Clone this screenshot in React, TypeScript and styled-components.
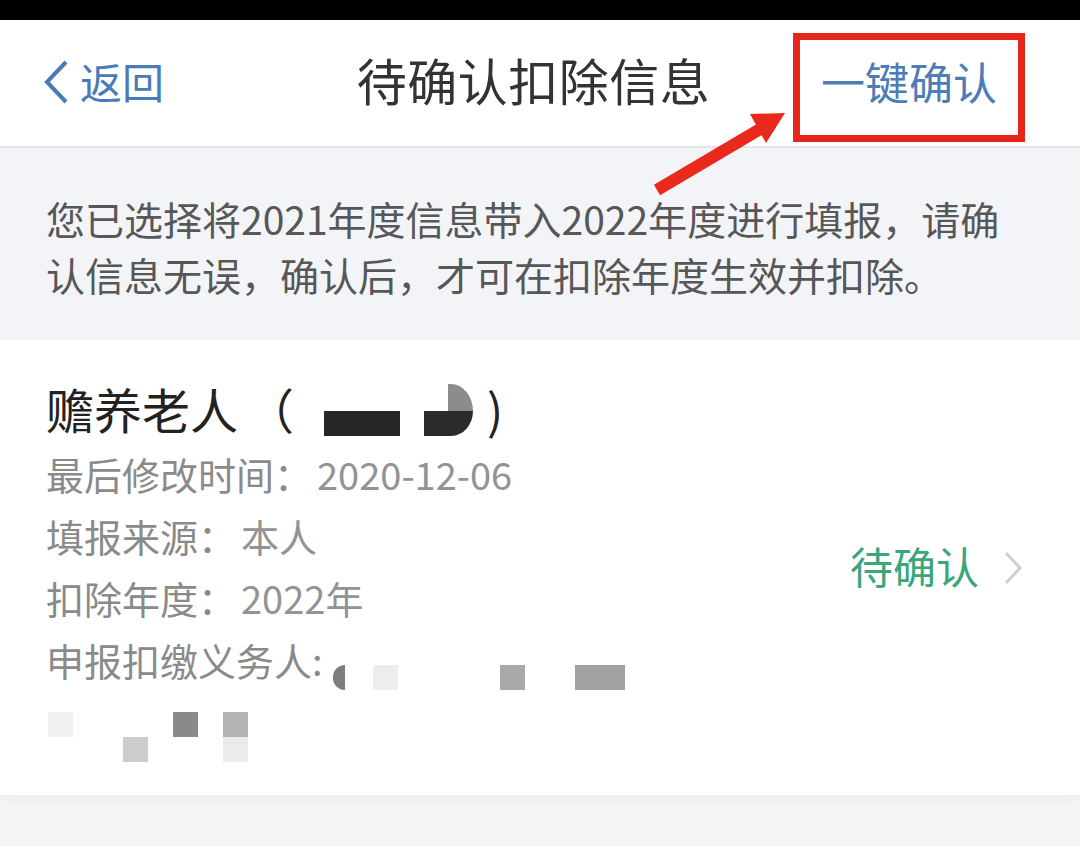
import React from 'react';
import styled, {createGlobalStyle} from 'styled-components';

const GlobalStyle = createGlobalStyle`
  body {
    margin: 0;
    background: #f5f5f8;
    font-family: "Noto Sans CJK SC", "Noto Sans", sans-serif;
  }
`

const Page = styled.div`
  position: relative;
  width: 1080px;
  height: 846px;
  overflow: hidden;
  background: #f5f5f8;
`

const StatusBar = styled.div`
  height: 20px;
  background: #000;
`

const Header = styled.div`
  display: grid;
  grid-template-columns: 1fr auto 1fr;
  align-items: center;
  height: 126px;
  padding: 0 55px 0 42px;
  background: #fff;
  border-bottom: 2px solid #e6e6e9;
`

const Back = styled.div`
  display: flex;
  align-items: center;
  gap: 10px;
  margin-bottom: 6px;
  color: #4b7bb6;
  font-size: 42px;

  & > svg { margin-top: 4px; }
`

const Title = styled.div`
  margin-bottom: 8px;
  color: #333;
  font-size: 50px;
  letter-spacing: 0.5px;
`

const ConfirmAll = styled.div`
  justify-self: end;
  margin-top: 9px;
  width: 218px;
  height: 81px;
  padding-bottom: 14px;
  border: 7px solid #e8251b;
  display: flex;
  align-items: center;
  justify-content: center;
  color: #4d7db6;
  font-size: 44px;
`

const Notice = styled.div`
  padding: 42px 46px 38px;
  background: #f3f4f8;
  color: #575757;
  font-size: 39px;
  line-height: 56px;
`

const Card = styled.div`
  display: flex;
  align-items: center;
  justify-content: space-between;
  padding: 36px 57px 33px 46px;
  background: #fff;
  box-shadow: 0 4px 10px rgba(0, 0, 0, 0.04);
`

const Info = styled.div`
  display: flex;
  flex-direction: column;
`

const CardTitle = styled.div`
  display: flex;
  align-items: center;
  height: 64px;
  margin-bottom: 2px;
  color: #222;
  font-size: 48px;
`

const Paren = styled.span`
  margin-left: 8px;
`

const Censor = styled.div`
  display: flex;
  align-items: flex-end;
  height: 52px;
  margin: 4px 14px 0 30px;
`

const Bar = styled.div<{ $w: number }>`
  width: ${p => p.$w}px;
  height: 25px;
  background: #262626;
`

const Blob = styled.div`
  display: grid;
  grid-template-columns: 24px 25px;
  grid-template-rows: 27px 25px;
  margin-left: 24px;

  & > span:nth-child(1) { grid-column: 2; grid-row: 1; background: #8c8c8c; border-top-right-radius: 22px 27px; }
  & > span:nth-child(2) { grid-column: 1; grid-row: 2; background: #2b2b2b; }
  & > span:nth-child(3) { grid-column: 2; grid-row: 2; background: #2b2b2b; border-bottom-right-radius: 22px 25px; }
`

const Line = styled.div`
  display: flex;
  align-items: center;
  height: 62px;
  color: #8a8a8a;
  font-size: 38px;
`

const Value = styled.span`
  margin-left: 5px;
  color: #939393;
`

const Pix = styled.div<{ $w: number; $ml: number; $c: string; $round?: boolean }>`
  width: ${p => p.$w}px;
  height: 25px;
  margin-top: 36px;
  margin-left: ${p => p.$ml}px;
  background: ${p => p.$c};
  border-radius: ${p => (p.$round ? '12px 0 0 12px' : '0')};
`

const Mosaic = styled.div`
  display: grid;
  grid-template-columns: repeat(8, 25px);
  grid-template-rows: 25px 25px;
  margin: 22px 0 0 2px;
`

const Cell = styled.div<{ $col: number; $row: number; $c: string }>`
  grid-column: ${p => p.$col};
  grid-row: ${p => p.$row};
  background: ${p => p.$c};
`

const Status = styled.div`
  display: flex;
  align-items: center;
  gap: 24px;
  margin-top: -8px;
  color: #3ba67c;
  font-size: 43px;

  & > svg { margin-top: 6px; }
`

const Arrow = styled.svg`
  position: absolute;
  left: 0;
  top: 0;
  pointer-events: none;
`

export default function App() {
    return (
        <Page>
            <GlobalStyle/>
            <StatusBar/>
            <Header>
                <Back>
                    <svg width="28" height="46" viewBox="0 0 28 46">
                        <path d="M24 3 L5 23 L24 43" fill="none" stroke="#4b7bb6" strokeWidth="4"/>
                    </svg>
                    返回
                </Back>
                <Title>待确认扣除信息</Title>
                <ConfirmAll>一键确认</ConfirmAll>
            </Header>
            <Notice>
                您已选择将2021年度信息带入2022年度进行填报，请确认信息无误，确认后，才可在扣除年度生效并扣除。
            </Notice>
            <Card>
                <Info>
                    <CardTitle>
                        赡养老人<Paren>（</Paren>
                        <Censor>
                            <Bar $w={76}/>
                            <Blob><span/><span/><span/></Blob>
                        </Censor>
                        )
                    </CardTitle>
                    <Line>最后修改时间：<Value>2020-12-06</Value></Line>
                    <Line>填报来源：<Value>本人</Value></Line>
                    <Line>扣除年度：<Value>2022年</Value></Line>
                    <Line>
                        申报扣缴义务人:
                        <Pix $w={12} $ml={10} $c="#7d7d7d" $round/>
                        <Pix $w={25} $ml={28} $c="#ededed"/>
                        <Pix $w={25} $ml={102} $c="#a9a9a9"/>
                        <Pix $w={50} $ml={50} $c="#a2a2a2"/>
                    </Line>
                    <Mosaic>
                        <Cell $col={1} $row={1} $c="#f1f1f1"/>
                        <Cell $col={6} $row={1} $c="#8a8a8a"/>
                        <Cell $col={8} $row={1} $c="#b4b4b4"/>
                        <Cell $col={4} $row={2} $c="#cdcdcd"/>
                        <Cell $col={8} $row={2} $c="#ebebeb"/>
                    </Mosaic>
                </Info>
                <Status>
                    待确认
                    <svg width="20" height="36" viewBox="0 0 20 36">
                        <path d="M3 3 L17 18 L3 33" fill="none" stroke="#cfcfcf" strokeWidth="3"/>
                    </svg>
                </Status>
            </Card>
            <Arrow width="1080" height="846">
                <line x1="657" y1="190" x2="762" y2="128" stroke="#e8291b" strokeWidth="12"/>
                <polygon points="785,113 750,114 766,143" fill="#e8291b"/>
            </Arrow>
        </Page>
    );
}
